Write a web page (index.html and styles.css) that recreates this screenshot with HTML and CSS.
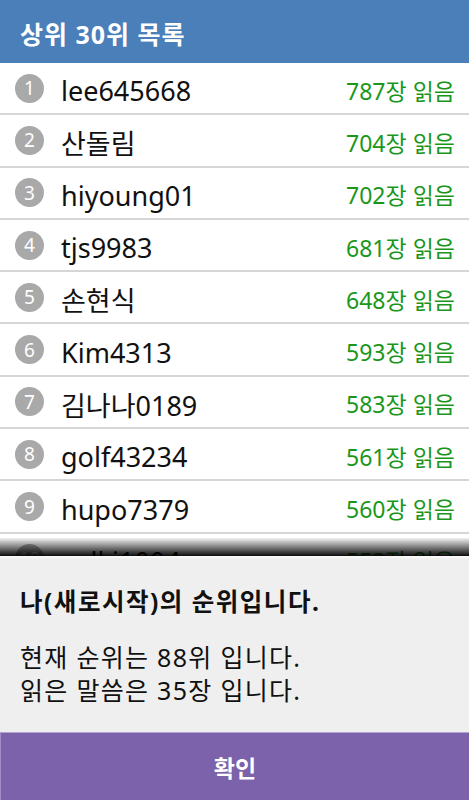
FILE: index.html
```html
<!DOCTYPE html>
<html lang="ko">
  <head>
    <meta charset="UTF-8" />
    <meta name="viewport" content="width=device-width, initial-scale=1.0" />
    <title>상위 30위 목록</title>
    <link rel="stylesheet" href="styles.css">
  </head>
  <body>
    <div class="screen">
      <header class="top-bar">
        <h1 class="top-title">상위 30위 목록</h1>
      </header>

      <!-- ranking list -->
      <ul class="rank-list">
        <li class="rank-row">
          <span class="rank-num">1</span>
          <span class="rank-name">lee645668</span>
          <span class="rank-count">787장 읽음</span>
        </li>
        <li class="rank-row">
          <span class="rank-num">2</span>
          <span class="rank-name">산돌림</span>
          <span class="rank-count">704장 읽음</span>
        </li>
        <li class="rank-row">
          <span class="rank-num">3</span>
          <span class="rank-name">hiyoung01</span>
          <span class="rank-count">702장 읽음</span>
        </li>
        <li class="rank-row">
          <span class="rank-num">4</span>
          <span class="rank-name">tjs9983</span>
          <span class="rank-count">681장 읽음</span>
        </li>
        <li class="rank-row">
          <span class="rank-num">5</span>
          <span class="rank-name">손현식</span>
          <span class="rank-count">648장 읽음</span>
        </li>
        <li class="rank-row">
          <span class="rank-num">6</span>
          <span class="rank-name">Kim4313</span>
          <span class="rank-count">593장 읽음</span>
        </li>
        <li class="rank-row">
          <span class="rank-num">7</span>
          <span class="rank-name">김나나0189</span>
          <span class="rank-count">583장 읽음</span>
        </li>
        <li class="rank-row">
          <span class="rank-num">8</span>
          <span class="rank-name">golf43234</span>
          <span class="rank-count">561장 읽음</span>
        </li>
        <li class="rank-row">
          <span class="rank-num">9</span>
          <span class="rank-name">hupo7379</span>
          <span class="rank-count">560장 읽음</span>
        </li>
        <li class="rank-row">
          <span class="rank-num">10</span>
          <span class="rank-name">sulki1004</span>
          <span class="rank-count">553장 읽음</span>
        </li>
      </ul>

      <!-- my rank dialog -->
      <div class="dialog">
        <div class="dialog-body">
          <h2 class="dialog-title">나(새로시작)의 순위입니다.</h2>
          <p class="dialog-text">현재 순위는 88위 입니다.<br />읽은 말씀은 35장 입니다.</p>
        </div>
        <button class="dialog-btn" type="button">확인</button>
      </div>
    </div>
  </body>
</html>
```

FILE: styles.css
```css
body {
  margin: 0;
  font-family: "Noto Sans", "Noto Sans CJK KR", sans-serif;
  background: #fff;
}
.screen {
  position: relative;
  width: 469px;
  height: 800px;
  overflow: hidden;
}
.top-bar {
  height: 63px;
  background-color: #4a7fb9;
  display: flex;
  align-items: center;
  padding-left: 20px;
}
.top-title {
  margin: 0;
  padding-top: 2px;
  font-size: 25px;
  font-weight: 700;
  color: #fff;
  letter-spacing: 1px;
}
.rank-list {
  list-style: none;
  margin: 0;
  padding: 0;
}
.rank-row {
  height: 50.3px;
  border-bottom: 2px solid #d6d6d6;
  display: flex;
  align-items: center;
  padding: 0 14px 0 15px;
}
.rank-num {
  width: 29px;
  height: 29px;
  border-radius: 50%;
  background-color: #a9a9a9;
  color: #fff;
  font-size: 19px;
  display: flex;
  align-items: center;
  justify-content: center;
  flex-shrink: 0;
}
.rank-name {
  margin-left: 17px;
  padding-top: 5px;
  font-size: 27px;
  color: #111;
  flex: 1;
}
.rank-count {
  padding-top: 3px;
  font-size: 23px;
  color: #1a971a;
}
.dialog {
  position: absolute;
  left: 0;
  right: 0;
  bottom: 0;
  height: 242px;
  background-color: #efefef;
  border-top: 2px solid #f8f8f8;
  display: flex;
  flex-direction: column;
}
.dialog::before {
  content: "";
  position: absolute;
  left: 0;
  right: 0;
  top: -20px;
  height: 18px;
  background: linear-gradient(to bottom, rgba(0, 0, 0, 0.05), rgba(0, 0, 0, 0.95));
}
.dialog-body {
  flex: 1;
  padding: 29px 20px 0;
  color: #111;
}
.dialog-title {
  margin: 0;
  font-size: 24.5px;
  line-height: 30px;
  font-weight: 700;
  letter-spacing: 1.5px;
}
.dialog-text {
  margin: 24px 0 0;
  font-size: 25px;
  line-height: 33px;
  letter-spacing: 1.3px;
}
.dialog-btn {
  height: 68px;
  border: none;
  border-top: 1px solid #b3a2d2;
  border-left: 1px solid #a08cc4;
  background-color: #7b62aa;
  color: #fff;
  font-family: inherit;
  font-size: 23px;
  font-weight: 700;
  padding: 0;
}
```
